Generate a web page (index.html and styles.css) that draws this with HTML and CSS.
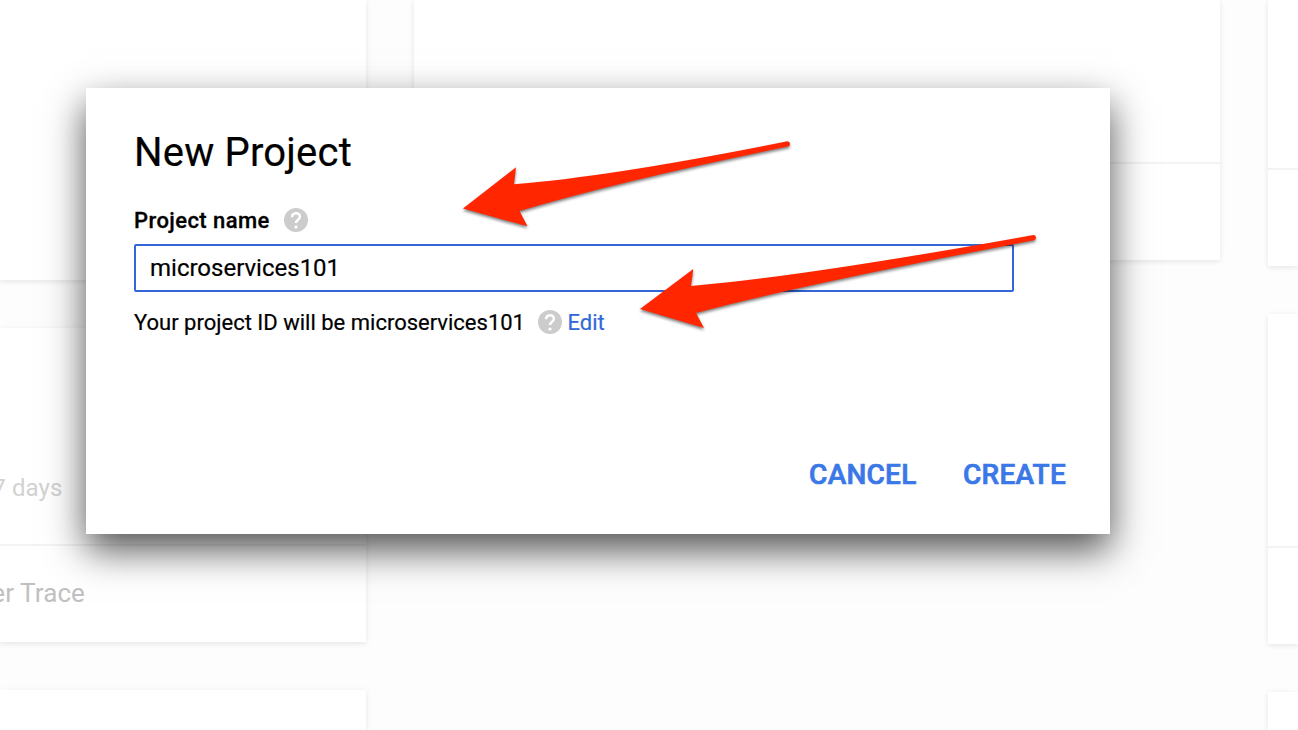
FILE: index.html
```html
<!DOCTYPE html>
<html lang="en">
<head>
<meta charset="utf-8">
<title>New Project</title>
<link rel="stylesheet" href="styles.css">
</head>
<body>
<main class="dashboard">
  <div class="column">
    <section class="card card-top-left"></section>
    <section class="card card-trace">
      <div class="card-body trace-body"><span>7 days</span></div>
      <div class="card-footer trace-footer"><span>er Trace</span></div>
    </section>
    <section class="card card-rest-left"></section>
  </div>
  <div class="column">
    <section class="card card-middle">
      <div class="card-body middle-body"></div>
      <div class="card-footer"></div>
    </section>
  </div>
  <div class="column">
    <section class="card card-right-top">
      <div class="card-body right-top-body"></div>
      <div class="card-footer"></div>
    </section>
    <section class="card card-right-mid">
      <div class="card-body right-mid-body"></div>
      <div class="card-footer"></div>
    </section>
    <section class="card card-rest-right"></section>
  </div>
</main>

<div class="dialog" role="dialog">
  <h1 class="title"><span>New Project</span></h1>
  <div class="label-row">
    <span class="label">Project name</span>
    <svg class="help" viewBox="0 0 24 24"><circle cx="12" cy="12" r="12"/><path d="M8.1 9.2C8.1 3.9 15.9 3.9 15.9 8.8c0 2.9-3.9 3.1-3.9 6.2" fill="none" stroke="#fff" stroke-width="2.5"/><circle class="dot" cx="12" cy="19" r="1.6"/></svg>
  </div>
  <div class="field"><span>microservices101</span></div>
  <div class="id-row">
    <span class="id-text">Your project ID will be microservices101</span>
    <svg class="help" viewBox="0 0 24 24"><circle cx="12" cy="12" r="12"/><path d="M8.1 9.2C8.1 3.9 15.9 3.9 15.9 8.8c0 2.9-3.9 3.1-3.9 6.2" fill="none" stroke="#fff" stroke-width="2.5"/><circle class="dot" cx="12" cy="19" r="1.6"/></svg>
    <a class="edit">Edit</a>
  </div>
  <div class="actions">
    <span>CANCEL</span>
    <span>CREATE</span>
  </div>
</div>

<svg class="arrows" viewBox="0 0 1298 730">
  <path d="M463 208.500L516 167.300L514 184.200Q610 177 787.500 141.300Q790 141.500 790 144Q790 146 788 146.500Q620 181 519.500 211L527.500 226.300Z"/>
  <path d="M640 309L693.300 269L691 286Q800 277 1033.500 235Q1036 235.300 1036 237.500Q1036 239.800 1034 240.300Q800 285 696 313L704 328Z"/>
</svg>
</body>
</html>
```

FILE: styles.css
```css
body {
  margin: 0;
  width: 1298px;
  height: 730px;
  overflow: hidden;
  position: relative;
  background: #fdfdfd;
  font-family: Roboto, "Liberation Sans", sans-serif;
  color: #000;
}
.dashboard {
  display: grid;
  grid-template-columns: 366px 806px 30px;
  gap: 48px;
  height: 730px;
}
.column {
  display: flex;
  flex-direction: column;
  gap: 48px;
}
.card {
  background: #fff;
  display: flex;
  flex-direction: column;
  box-shadow: 0 2px 5px rgba(0, 0, 0, .07), 0 0 10px rgba(0, 0, 0, .03);
}
.card-top-left { height: 280px; }
.card-trace { height: 314px; }
.card-middle { height: 260px; }
.card-right-top { height: 266px; }
.card-right-mid { height: 330px; }
.card-rest-left { height: 40px; }
.card-rest-right { height: 38px; }
.card-body {
  border-bottom: 2px solid #f3f3f3;
  white-space: nowrap;
}
.card-footer { flex: 1; }
.trace-body {
  height: 134px;
  padding: 82px 303.500px 0 0;
  display: flex;
  justify-content: flex-end;
  line-height: 156px;
  color: #d2d2d2;
  font-size: 24px;
  letter-spacing: .1px;
}
.trace-footer {
  display: flex;
  justify-content: flex-end;
  padding-right: 281px;
  line-height: 94px;
  white-space: nowrap;
  color: #c0c0c0;
  font-size: 26px;
  letter-spacing: .1px;
}
.middle-body { height: 162px; width: 806px; }
.right-top-body { height: 168px; }
.right-mid-body { height: 232px; }

.dialog {
  position: absolute;
  left: 86px;
  top: 88px;
  width: 1024px;
  height: 446px;
  box-sizing: border-box;
  padding: 41px 44px 0 48px;
  display: flex;
  flex-direction: column;
  background: #fff;
  box-shadow: 0 16px 36px rgba(0, 0, 0, .68);
}
.title {
  margin: 0;
  height: 48px;
  line-height: 48px;
  font-size: 40px;
  font-weight: 400;
  letter-spacing: .2px;
  -webkit-text-stroke: .2px;
}
.label-row {
  display: flex;
  align-items: center;
  gap: 14px;
  height: 24px;
  margin-top: 31px;
}
.label {
  font-size: 22px;
  font-weight: 500;
  letter-spacing: .42px;
  -webkit-text-stroke: .3px;
}
.help {
  width: 24px;
  height: 24px;
  flex: none;
  fill: #ccc;
}
.dot { fill: #fff; }
.field {
  width: 880px;
  height: 48px;
  margin-top: 12px;
  box-sizing: border-box;
  border: 2px solid #3367d6;
  border-radius: 2px;
  padding-left: 14px;
  line-height: 44px;
  font-size: 24px;
  -webkit-text-stroke: .2px;
}
.id-row {
  display: flex;
  align-items: center;
  height: 24px;
  margin-top: 18px;
  font-size: 22px;
  -webkit-text-stroke: .2px;
}
.id-text { margin-right: 13px; }
.edit {
  margin-left: 5.500px;
  color: #3367d6;
}
.actions {
  display: flex;
  justify-content: flex-end;
  gap: 46.500px;
  margin-top: 125px;
  line-height: 32px;
  font-size: 28px;
  font-weight: 500;
  letter-spacing: .25px;
  -webkit-text-stroke: .7px;
  color: #3b78e7;
}
.arrows {
  position: absolute;
  left: 0;
  top: 0;
  width: 1298px;
  height: 730px;
  fill: #ff2600;
  filter: drop-shadow(0 2px 1.5px rgba(0, 0, 0, .5));
}
```
